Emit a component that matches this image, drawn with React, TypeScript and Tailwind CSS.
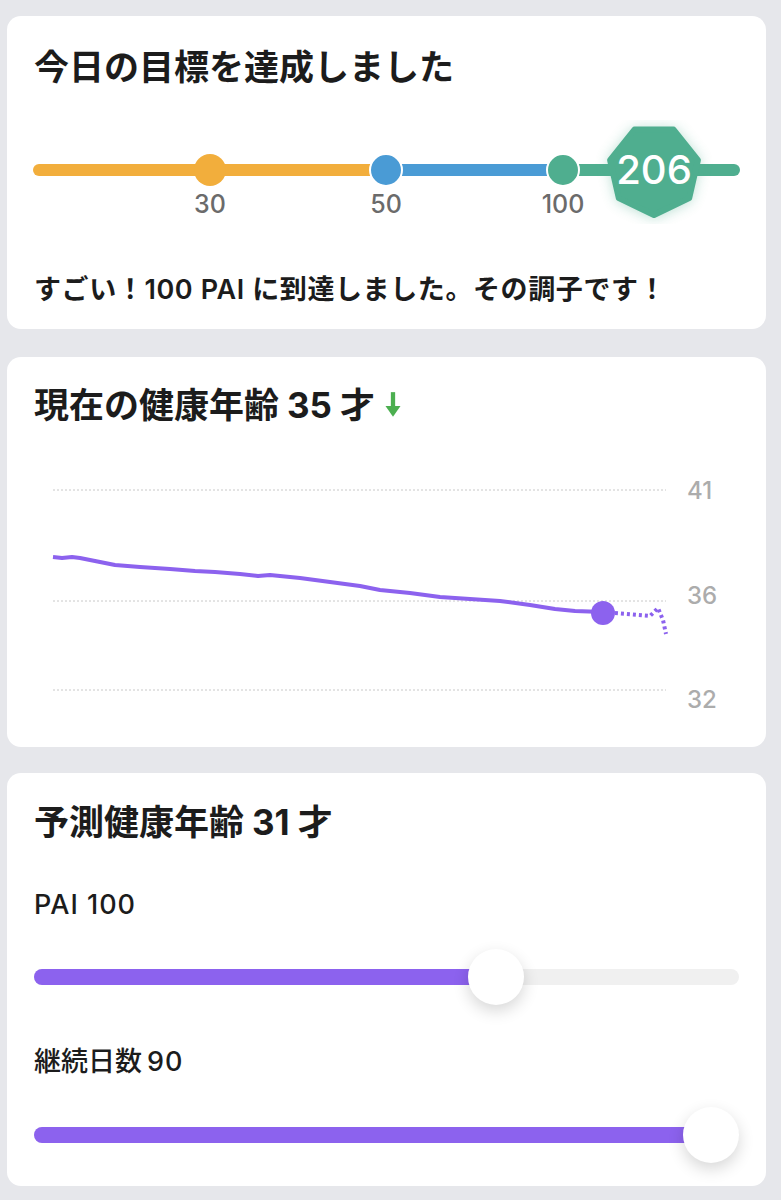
const font = "font-['Inter','Noto_Sans_CJK_JP',sans-serif]";

// current age chart, page coordinates
const linePts: [number, number][] = [
    [53, 557], [62, 558], [72, 557], [80, 558], [95, 561], [115, 565], [140, 567], [170, 569],
    [195, 571], [215, 572], [240, 574], [258, 576], [270, 575], [300, 578], [330, 582],
    [360, 586], [380, 590], [410, 593], [440, 597], [470, 599], [500, 601], [530, 605],
    [555, 609], [575, 611], [603, 612],
];
const dottedPts: [number, number][] = [[603, 612], [650, 616], [658, 608], [663, 620], [666, 634]];

const toPath = (pts: [number, number][]) => pts.map(([x, y], i) => `${i ? "L" : "M"}${x} ${y}`).join(" ");

function heptagon(cx: number, cy: number, r: number) {
    const pts: string[] = [];
    for (let k = 0; k < 7; k++) {
        const a = ((90 + (k * 360) / 7) * Math.PI) / 180;
        pts.push(`${(cx + r * Math.cos(a)).toFixed(1)},${(cy + r * Math.sin(a)).toFixed(1)}`);
    }
    return pts.join(" ");
}

function Card({ children, className }: { children: React.ReactNode; className?: string }) {
    return <div className={`ml-[7px] w-[759px] rounded-[14px] bg-white ${className ?? ""}`}>{children}</div>
}

function Slider({ pct, className }: { pct: number; className?: string }) {
    return <div className={`relative h-[56px] mx-[27px] ${className ?? ""}`}>
        <div className="absolute left-0 right-0 top-[20px] h-[16px] rounded-full bg-[#f0f0f0]" />
        <div className="absolute left-0 top-[20px] h-[16px] rounded-full bg-[#8c62ee]" style={{ width: `${pct}%` }} />
        <div className="absolute top-0 size-[56px] -translate-x-1/2 rounded-full bg-white shadow-[0_6px_16px_rgba(0,0,0,0.16)]"
            style={{ left: `${pct}%` }} />
    </div>
}

export default function App() {
    return <div className={`min-h-[1200px] w-[781px] bg-[#e6e7eb] pt-[16px] ${font} text-[#1c1c1c]`}>
        {/* goal achieved */}
        <Card className="pt-[29px] pb-[21px]">
            <h2 className="px-[27px] text-[35px] font-bold leading-[44px]">今日の目標を達成しました</h2>
            <svg width={759} height={104} viewBox="7 120 759 104" className="mt-[31px] block">
                <defs>
                    <filter id="glow" x="-50%" y="-50%" width="200%" height="200%">
                        <feGaussianBlur stdDeviation="7" />
                    </filter>
                </defs>
                <line x1={39} y1={170} x2={375} y2={170} stroke="#f2ae3c" strokeWidth={12} strokeLinecap="round" />
                <line x1={386} y1={170} x2={563} y2={170} stroke="#4a9bd5" strokeWidth={12} />
                <line x1={563} y1={170} x2={734} y2={170} stroke="#4fae8f" strokeWidth={12} strokeLinecap="round" />
                <circle cx={210} cy={170} r={16} fill="#f2ae3c" />
                <circle cx={386} cy={170} r={16} fill="#4a9bd5" stroke="#fff" strokeWidth={2} />
                <circle cx={563} cy={170} r={16} fill="#4fae8f" stroke="#fff" strokeWidth={2} />
                <polygon points={heptagon(654, 171, 47)} fill="#4fae8f" opacity={0.45} filter="url(#glow)" />
                <polygon points={heptagon(654, 170, 45)} fill="#4fae8f" stroke="#4fae8f" strokeWidth={6} strokeLinejoin="round" />
                <text x={654} y={184} textAnchor="middle" fill="#fff" fontSize={40} fontWeight={500}>206</text>
                {[[210, "30"], [386, "50"], [563, "100"]].map(([x, t]) =>
                    <text key={t} x={x} y={213} textAnchor="middle" fill="#6b6b6b" fontSize={25} fontWeight={500}>{t}</text>
                )}
            </svg>
            <p className="mt-[48px] px-[27px] text-[27px] font-semibold leading-[36px] tracking-[0.6px]">すごい！100 PAI に到達しました。その調子です！</p>
        </Card>

        {/* current health age */}
        <Card className="mt-[28px] pt-[26px] pb-[17px]">
            <h2 className="flex items-center px-[27px] text-[35px] font-bold leading-[44px]">
                現在の健康年齢<span className="mx-[8px]">35</span>才
                <svg width={20} height={30} viewBox="0 0 18 28" className="ml-[8px]">
                    <path d="M9 2 V20" stroke="#4caf50" strokeWidth={4} />
                    <path d="M2 15 L9 25 L16 15 Z" fill="#4caf50" />
                </svg>
            </h2>
            <svg width={759} height={270} viewBox="7 460 759 270" className="mt-[33px] block">
                {[490, 601, 690].map((y) =>
                    <line key={y} x1={53} y1={y} x2={666} y2={y} stroke="#c8c8c8" strokeWidth={1} strokeDasharray="2 2" />
                )}
                {[[490, "41"], [595, "36"], [699, "32"]].map(([y, t]) =>
                    <text key={t} x={687} y={Number(y) + 9} fill="#acacac" fontSize={24} fontWeight={500}>{t}</text>
                )}
                <path d={toPath(linePts)} fill="none" stroke="#8c62ee" strokeWidth={4} strokeLinejoin="round" />
                <path d={toPath(dottedPts)} fill="none" stroke="#8c62ee" strokeWidth={4} strokeDasharray="3 3" />
                <circle cx={603} cy={613} r={12} fill="#8c62ee" />
            </svg>
        </Card>

        {/* predicted health age */}
        <Card className="mt-[26px] pt-[27px] pb-[23px]">
            <h2 className="px-[27px] text-[35px] font-bold leading-[44px]">予測健康年齢<span className="mx-[8px]">31</span>才</h2>
            <p className="mt-[43px] px-[27px] text-[27px] font-medium leading-[36px] tracking-[1px]">PAI 100</p>
            <Slider pct={65.5} className="mt-[26px]" />
            <p className="mt-[39px] px-[27px] text-[27px] font-medium leading-[36px]">継続日数<span className="ml-[5px] tracking-[1px]">90</span></p>
            <Slider pct={96} className="mt-[27px]" />
        </Card>
    </div>
}
